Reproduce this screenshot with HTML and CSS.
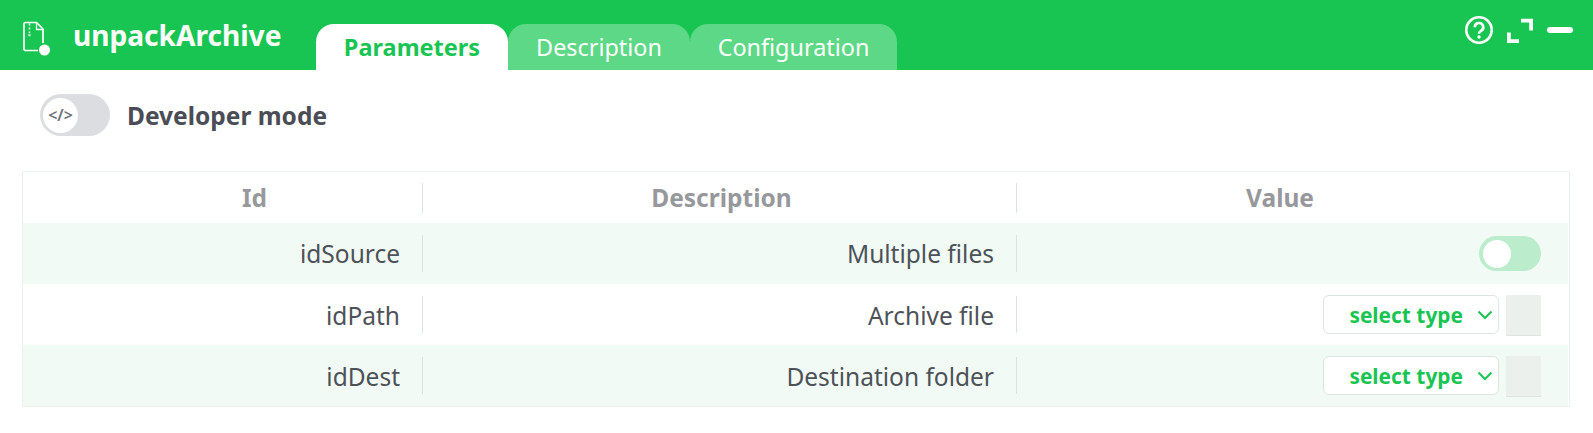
FILE: index.html
```html
<!DOCTYPE html>
<html lang="en">
<head>
<meta charset="utf-8">
<title>unpackArchive</title>
<link rel="stylesheet" href="styles.css">
</head>
<body>
<header class="topbar">
  <svg class="file-icon" width="30" height="36" viewBox="0 0 30 36" fill="none" stroke="#fff" stroke-width="1.7">
    <path d="M17 29.5H4.5A1.5 1.5 0 0 1 3 28V3A1.5 1.5 0 0 1 4.5 1.5H15.5L22 8V22"/>
    <path d="M15.5 2V8.5H21.5" stroke-width="1.3"/>
    <path d="M8.5 2.5V4.5M8.5 6.5V8.5M8.5 10.5V12" stroke-width="1.5"/>
    <circle cx="8.5" cy="14" r="1.6" fill="#fff" fill-opacity=".55" stroke="none"/>
    <circle cx="23.5" cy="29" r="5.5" fill="#fff" stroke="none"/>
  </svg>
  <h1 class="title">unpackArchive</h1>
  <nav class="tabs">
    <span class="tab tab-active">Parameters</span>
    <span class="tab tab-desc">Description</span>
    <span class="tab tab-conf">Configuration</span>
  </nav>
  <div class="actions">
    <svg width="30" height="30" viewBox="0 0 30 30" fill="none" stroke="#fff">
      <circle cx="15" cy="15" r="12.7" stroke-width="2.6"/>
      <path d="M10.8 12.2A4.2 4.2 0 1 1 16.8 16C15.5 16.8 15 17.3 15 18.8" stroke-width="2.6"/>
      <circle cx="15" cy="22" r="1.7" fill="#fff" stroke="none"/>
    </svg>
    <svg width="28" height="26" viewBox="0 0 28 26" fill="none" stroke="#fff" stroke-width="3.8">
      <path d="M15 3.6H25.1V13.5"/>
      <path d="M2.9 15.5V24.2H13"/>
    </svg>
    <span class="minimize"></span>
  </div>
</header>
<main class="content">
  <div class="devmode">
    <div class="switch switch-grey"><span class="knob knob-code">&lt;/&gt;</span></div>
    <span class="devlabel">Developer mode</span>
  </div>
  <div class="table">
    <div class="row head">
      <div class="cell c1">Id</div>
      <div class="cell c2">Description</div>
      <div class="cell c3">Value</div>
    </div>
    <div class="row odd">
      <div class="cell c1">idSource</div>
      <div class="cell c2">Multiple files</div>
      <div class="cell c3"><div class="switch switch-green"><span class="knob"></span></div></div>
    </div>
    <div class="row input-row">
      <div class="cell c1">idPath</div>
      <div class="cell c2">Archive file</div>
      <div class="cell c3">
        <div class="select">select type<svg width="16" height="10" viewBox="0 0 16 10" fill="none" stroke="#19c552" stroke-width="2"><path d="M1.5 1.5L8 8L14.5 1.5"/></svg></div>
        <div class="field"></div>
      </div>
    </div>
    <div class="row odd input-row">
      <div class="cell c1">idDest</div>
      <div class="cell c2">Destination folder</div>
      <div class="cell c3">
        <div class="select">select type<svg width="16" height="10" viewBox="0 0 16 10" fill="none" stroke="#19c552" stroke-width="2"><path d="M1.5 1.5L8 8L14.5 1.5"/></svg></div>
        <div class="field"></div>
      </div>
    </div>
  </div>
</main>
</body>
</html>
```
FILE: styles.css
```css
* { box-sizing: border-box; }
html, body { margin: 0; padding: 0; }
body {
  width: 1593px;
  height: 433px;
  background: #fff;
  font-family: "Noto Sans", sans-serif;
  color: #4a4d55;
  overflow: hidden;
}
.topbar {
  height: 70px;
  background: #19c552;
  display: flex;
  align-items: flex-end;
  position: relative;
  padding-left: 21px;
}
.file-icon { align-self: flex-start; margin-top: 21px; }
.title {
  margin: 0 35px 0 22px;
  align-self: flex-start;
  padding-top: 16px;
  font-size: 28.1px;
  line-height: 38px;
  font-weight: 700;
  color: #fff;
  width: 208px;
  white-space: nowrap;
}
.tabs { display: flex; height: 46px; }
.tab {
  display: flex;
  align-items: center;
  justify-content: center;
  height: 46px;
  border-radius: 18px 18px 0 0;
  font-size: 23.4px;
  color: #fff;
  background: #5dd886;
}
.tab-active { width: 192px; background: #fff; color: #19c552; font-weight: 700; font-size: 23.5px; }
.tab-desc { width: 182px; }
.tab-conf { width: 207px; }
.actions {
  margin-left: auto;
  align-self: flex-start;
  display: flex;
  align-items: center;
  gap: 12px;
  padding: 15px 20px 0 0;
}
.minimize { width: 26px; height: 6px; margin-left: 1px; border-radius: 3px; background: #fff; }
.content { padding: 24px 22px 0; }
.devmode { display: flex; align-items: center; margin-left: 18px; gap: 17px; height: 42px; }
.switch {
  border-radius: 21px;
  display: flex;
  align-items: center;
  padding-left: 4px;
}
.switch-grey { width: 70px; height: 42px; background: #dcdde0; padding-left: 3px; }
.switch-green { width: 62px; height: 35px; background: #bbeccb; }
.knob { width: 28px; height: 28px; border-radius: 50%; background: #fff; display: block; }
.knob-code {
  width: 35px;
  height: 35px;
  display: flex;
  align-items: center;
  justify-content: center;
  font-size: 16px;
  font-weight: 600;
  color: #6b6e75;
}
.devlabel { font-size: 24.5px; font-weight: 700; color: #4a4d55; }
.table {
  margin-top: 35px;
  width: 1548px;
  padding-right: 1px;
  border: 1px solid #eceff0;
}
.row { display: grid; grid-template-columns: 400px 594px 1fr; height: 61px; align-items: center; }
.row.odd { background: #f2faf6; }
.row.head { height: 51px; }
.cell {
  font-size: 24.5px;
  text-align: right;
  padding-right: 22px;
  color: #4d5258;
  display: flex;
  justify-content: flex-end;
  align-items: center;
  height: 37px;
  border-right: 1px solid #dbe3e2;
}
.input-row .c1, .input-row .c2 { padding-top: 2px; }
.c3 { border-right: 0; padding-right: 27px; gap: 7px; height: 41px; }
.input-row .c3 { margin-top: 2px; }
.head .cell {
  justify-content: center;
  padding: 0;
  font-weight: 700;
  color: #97989c;
  height: 30px;
}
.head .c1 { padding-left: 64px; }
.head .c2 { padding-left: 4px; }
.head .c3 { padding-right: 25px; }
.select {
  width: 176px;
  height: 39px;
  align-self: flex-start;
  border: 1px solid #dbe5e2;
  border-radius: 6px;
  background: #fff;
  color: #19c552;
  font-size: 20.9px;
  font-weight: 700;
  display: flex;
  align-items: center;
  justify-content: flex-end;
  gap: 14px;
  padding-right: 5px;
}
.field {
  width: 35px;
  height: 41px;
  background: #ebf0ed;
  border-bottom: 1px solid #dde4e2;
}
```
